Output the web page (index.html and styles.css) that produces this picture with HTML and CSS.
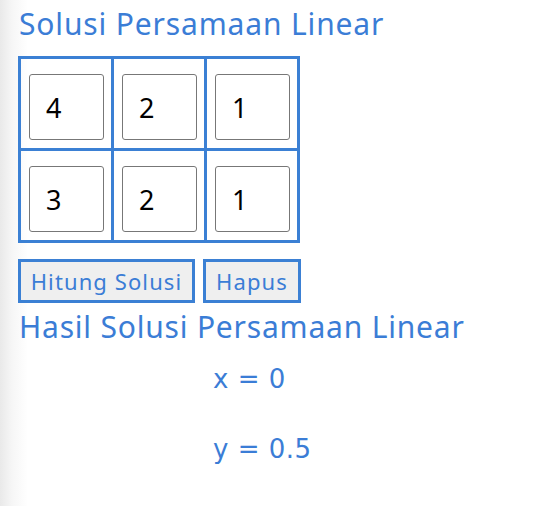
FILE: index.html
```html
<!DOCTYPE html>
<html lang="id">
<head>
<meta charset="utf-8">
<title>Solusi Persamaan Linear</title>
<link rel="stylesheet" href="styles.css">
</head>
<body>
<div class="page">
  <h1 class="title">Solusi Persamaan Linear</h1>
  <table class="matrix">
    <tr>
      <td><input class="cell" type="text" value="4"></td>
      <td><input class="cell" type="text" value="2"></td>
      <td><input class="cell" type="text" value="1"></td>
    </tr>
    <tr>
      <td><input class="cell" type="text" value="3"></td>
      <td><input class="cell" type="text" value="2"></td>
      <td><input class="cell" type="text" value="1"></td>
    </tr>
  </table>
  <div class="actions">
    <button class="btn btn-wide" type="button">Hitung Solusi</button>
    <button class="btn btn-narrow" type="button">Hapus</button>
  </div>
  <h2 class="title result-title">Hasil Solusi Persamaan Linear</h2>
  <div class="results">
    <p class="res">x = 0</p>
    <p class="res">y = 0.5</p>
  </div>
</div>
</body>
</html>
```

FILE: styles.css
```css
html, body {
  margin: 0;
  padding: 0;
  height: 100%;
}
body {
  background: linear-gradient(to right, #e9e9e9 0px, #f6f6f6 12px, #ffffff 28px);
  font-family: "Noto Sans", "Open Sans", sans-serif;
}
.page {
  padding: 6px 0 0 18px;
}
.title {
  margin: 0;
  font-size: 30px;
  line-height: 36px;
  font-weight: 400;
  color: #3b7dd6;
  padding-left: 1px;
  letter-spacing: 0.85px;
}
.matrix {
  margin-top: 14px;
  border-collapse: collapse;
  border: 3px solid #3b80d4;
}
.matrix td {
  border: 3px solid #3b80d4;
  padding: 15px 7px 8px 8px;
  width: 75px;
  height: 66px;
  vertical-align: top;
}
.cell {
  display: block;
  box-sizing: border-box;
  width: 75px;
  height: 66px;
  margin: 0;
  border: 1px solid #777777;
  border-radius: 3px;
  padding: 0 0 0 16px;
  font-family: "Noto Sans", sans-serif;
  font-size: 27px;
  color: #000;
  background: #fff;
}
.actions {
  display: flex;
  gap: 8px;
  margin-top: 16px;
}
.btn {
  box-sizing: border-box;
  height: 44px;
  border: 3px solid #3b80d4;
  background: #efefef;
  color: #3b7dd6;
  font-family: "Noto Sans", sans-serif;
  font-size: 22px;
  letter-spacing: 1.1px;
  padding: 0 4px;
  margin: 0;
}
.btn-wide { width: 177px; }
.btn-narrow { width: 98px; }
.result-title {
  margin-top: 6px;
  letter-spacing: 0.8px;
}
.results {
  padding-left: 195px;
  margin-top: 17px;
}
.res {
  margin: 0;
  font-family: "DejaVu Sans", sans-serif;
  font-size: 26px;
  line-height: 34px;
  color: #3b7dd6;
  letter-spacing: 0.5px;
}
.res + .res {
  margin-top: 36px;
}
```
